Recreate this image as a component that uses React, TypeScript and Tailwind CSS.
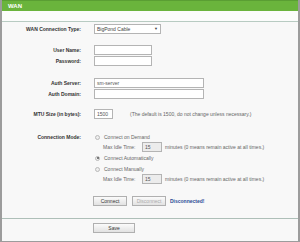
import React from 'react';

const font = { fontFamily: '"Liberation Sans", Arial, sans-serif' };

function Label({ children }: { children: React.ReactNode }) {
  return (
    <div className="w-[79px] shrink-0 text-right font-bold text-[5px] leading-none text-[#333]">
      {children}
    </div>
  );
}

function Row({ label, children, className = '' }: { label?: string; children?: React.ReactNode; className?: string }) {
  return (
    <div className={`flex items-center h-[10px] ${className}`}>
      <Label>{label}</Label>
      <div className="ml-[13px] flex items-center h-full">{children}</div>
    </div>
  );
}

function TextBox({ w, value = '', gray = false }: { w: string; value?: string; gray?: boolean }) {
  return (
    <div
      className={`${w} h-[10px] border border-[#b4b4b4] ${gray ? 'bg-[#ececec]' : 'bg-white'} text-[5px] leading-none text-[#555] flex items-center px-[2px]`}
    >
      {value}
    </div>
  );
}

function Radio({ checked = false }: { checked?: boolean }) {
  return (
    <span className="w-[5px] h-[5px] rounded-full border border-[#b9b9b9] bg-[#eeeeee] flex items-center justify-center">
      {checked && <span className="w-[2px] h-[2px] rounded-full bg-[#555]" />}
    </span>
  );
}

function IdleRow() {
  return (
    <Row>
      <span className="ml-[9px] text-[5px] leading-none text-[#666] w-[39px]">Max Idle Time:</span>
      <TextBox w="w-[20px]" value="15" gray />
      <span className="ml-[3px] text-[5px] leading-none text-[#666]">
        minutes (0 means remain active at all times.)
      </span>
    </Row>
  );
}

function Btn({ children, disabled = false, w }: { children: React.ReactNode; disabled?: boolean; w: string }) {
  return (
    <div
      className={`${w} h-[10px] border border-[#b0b0b0] bg-gradient-to-b from-[#fbfbfb] to-[#e2e2e2] flex items-center justify-center text-[5px] leading-none ${disabled ? 'text-[#aaa]' : 'text-[#333]'}`}
    >
      {children}
    </div>
  );
}

export default function App() {
  return (
    <div style={font} className="w-[300px] h-[242px] bg-[#f8f8f8] border-l-2 border-r-2 border-b border-[#9c9c9c] flex flex-col overflow-hidden">
      {/* header */}
      <div className="h-[11px] bg-[#6ab43c] border-t border-[#5a9e33] flex items-center pl-[6px]">
        <span className="text-white font-bold text-[6px] leading-none">WAN</span>
      </div>
      <div className="h-[11px] bg-[#fbfcfb] border-b border-[#b8cbc2]" />

      <div className="flex-1 flex flex-col">
        <Row label="WAN Connection Type:" className="mt-[2px]">
          <div className="w-[67px] h-[10px] border border-[#b4b4b4] bg-white flex items-center justify-between px-[2px] text-[5px] leading-none text-[#444]">
            <span>BigPond Cable</span>
            <span className="text-[4px]">▼</span>
          </div>
        </Row>

        <Row label="User Name:" className="mt-[11px]">
          <TextBox w="w-[58px]" />
        </Row>
        <Row label="Password:" className="mt-[1px]">
          <TextBox w="w-[58px]" />
        </Row>

        <Row label="Auth Server:" className="mt-[12px]">
          <TextBox w="w-[110px]" value="sm-server" />
        </Row>
        <Row label="Auth Domain:" className="mt-[1px]">
          <TextBox w="w-[110px]" />
        </Row>

        <Row label="MTU Size (in bytes):" className="mt-[10px]">
          <TextBox w="w-[19px]" value="1500" />
          <span className="ml-[17px] text-[5px] leading-none text-[#666]">
            (The default is 1500, do not change unless necessary.)
          </span>
        </Row>

        <Row label="Connection Mode:" className="mt-[13px]">
          <span className="ml-[1px]"><Radio /></span>
          <span className="ml-[4px] text-[5px] leading-none text-[#666]">Connect on Demand</span>
        </Row>
        <IdleRow />
        <Row className="mt-[1px]">
          <span className="ml-[1px]"><Radio checked /></span>
          <span className="ml-[4px] text-[5px] leading-none text-[#666]">Connect Automatically</span>
        </Row>
        <Row className="mt-[1px]">
          <span className="ml-[1px]"><Radio /></span>
          <span className="ml-[4px] text-[5px] leading-none text-[#666]">Connect Manually</span>
        </Row>
        <IdleRow />

        <Row className="mt-[12px]">
          <span className="-ml-[1px]"><Btn w="w-[34px]">Connect</Btn></span>
          <span className="ml-[5px]"><Btn w="w-[34px]" disabled>Disconnect</Btn></span>
          <span className="ml-[4px] font-bold text-[5px] leading-none text-[#2a4a95]">Disconnected!</span>
        </Row>
      </div>

      <div className="h-[23px] border-t border-[#aebfb8] flex items-start">
        <div className="ml-[91px] mt-[4px]">
          <Btn w="w-[42px]">Save</Btn>
        </div>
      </div>
    </div>
  );
}
